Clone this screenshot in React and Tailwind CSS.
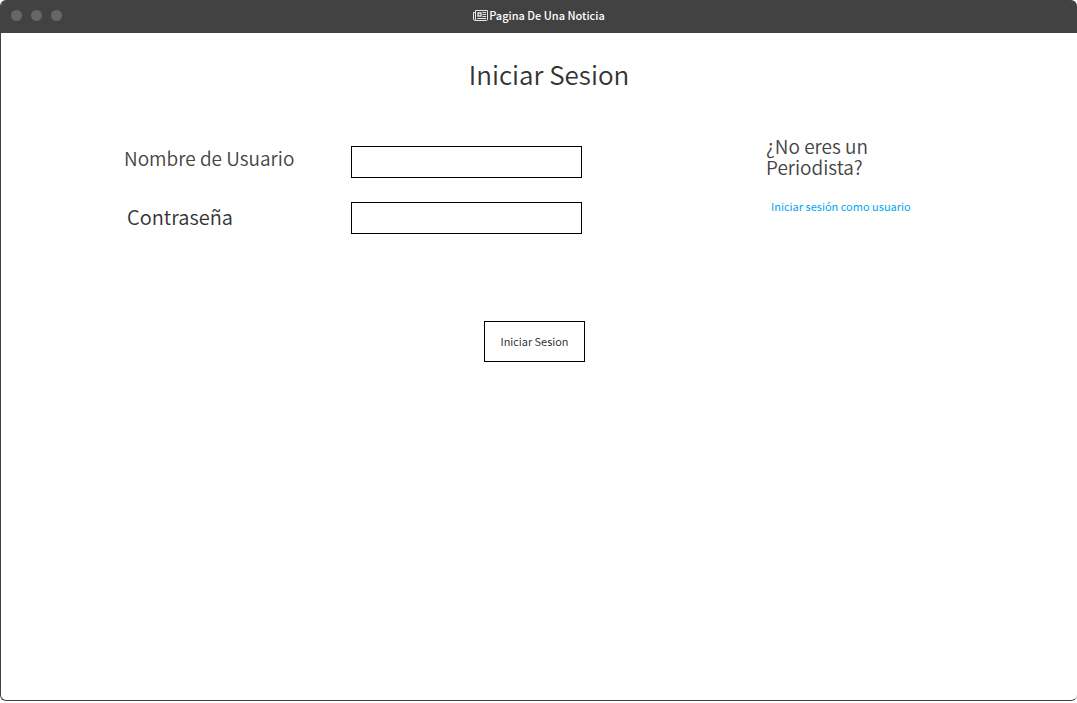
function NewspaperIcon() {
  return (
    <svg viewBox="0 0 15 11" className="h-[11px] w-[15px]" fill="none" stroke="#e6e6e6" aria-hidden="true">
      <path d="M2.5 0.5h12v8.7a1.2 1.2 0 0 1-1.2 1.3H1.7" />
      <path d="M2.5 0.5v8.7a1 1 0 0 1-2 0V2.5h2" />
      <path d="M5 3h3v3H5z" strokeWidth="1.3" />
      <path d="M9.5 2.5H13M9.5 4.5H13M9.5 6.5H13M4.3 8.5H13" />
    </svg>
  );
}

function TitleBar() {
  return (
    <header className="grid h-[33px] grid-cols-[1fr_auto_1fr] items-center bg-[#424242] px-[10px] pb-[3px]">
      <div className="flex gap-[9px]" aria-hidden="true">
        <span className="size-[11px] rounded-full bg-[#666666]" />
        <span className="size-[11px] rounded-full bg-[#666666]" />
        <span className="size-[11px] rounded-full bg-[#666666]" />
      </div>
      <p className="flex items-center gap-px text-[11px] leading-4 font-medium text-white">
        <NewspaperIcon />
        Pagina De Una Noticia
      </p>
    </header>
  );
}

export default function App() {
  return (
    <div className="flex min-h-[calc(100vh-2px)] flex-col overflow-hidden rounded-md border-b border-l border-[#424242] bg-white font-['Noto_Sans_CJK_SC','Noto_Sans',sans-serif]">
      <TitleBar />
      <main className="flex-1 pt-6">
        <h1 className="pl-5 text-center text-[26px] leading-[34px] font-[350] text-[#333333]">Iniciar Sesion</h1>
        <div className="mt-[42px] grid grid-cols-[765fr_311fr] pt-[13px]">
          <form onSubmit={(e) => e.preventDefault()}>
            <div className="grid grid-cols-[350fr_415fr] gap-y-6">
              <label htmlFor="user" className="pl-[123px] text-[19px] leading-6 font-[350] text-[#444444]">
                Nombre de Usuario
              </label>
              <input id="user" type="text" className="h-8 w-[231px] border border-black px-2 text-sm outline-none" />
              <label htmlFor="password" className="pt-[3px] pl-[126px] text-[20px] leading-6 font-[350] text-[#333333]">
                Contraseña
              </label>
              <input id="password" type="password" className="h-8 w-[231px] border border-black px-2 text-sm outline-none" />
            </div>
            <div className="mt-[87px] grid grid-cols-[483fr_282fr]">
              <button type="submit" className="col-start-2 h-[41px] w-[101px] border border-black text-[11px] font-[350] text-[#222222]">
                Iniciar Sesion
              </button>
            </div>
          </form>
          <aside className="-mt-[11px]">
            <h2 className="w-[130px] text-[19px] leading-[21px] font-[350] text-[#444444]">¿No eres un Periodista?</h2>
            <a href="#usuario" className="mt-[21px] block pl-[5px] text-[11px] leading-4 text-[#00a7f0]">
              Iniciar sesión como usuario
            </a>
          </aside>
        </div>
      </main>
    </div>
  );
}
